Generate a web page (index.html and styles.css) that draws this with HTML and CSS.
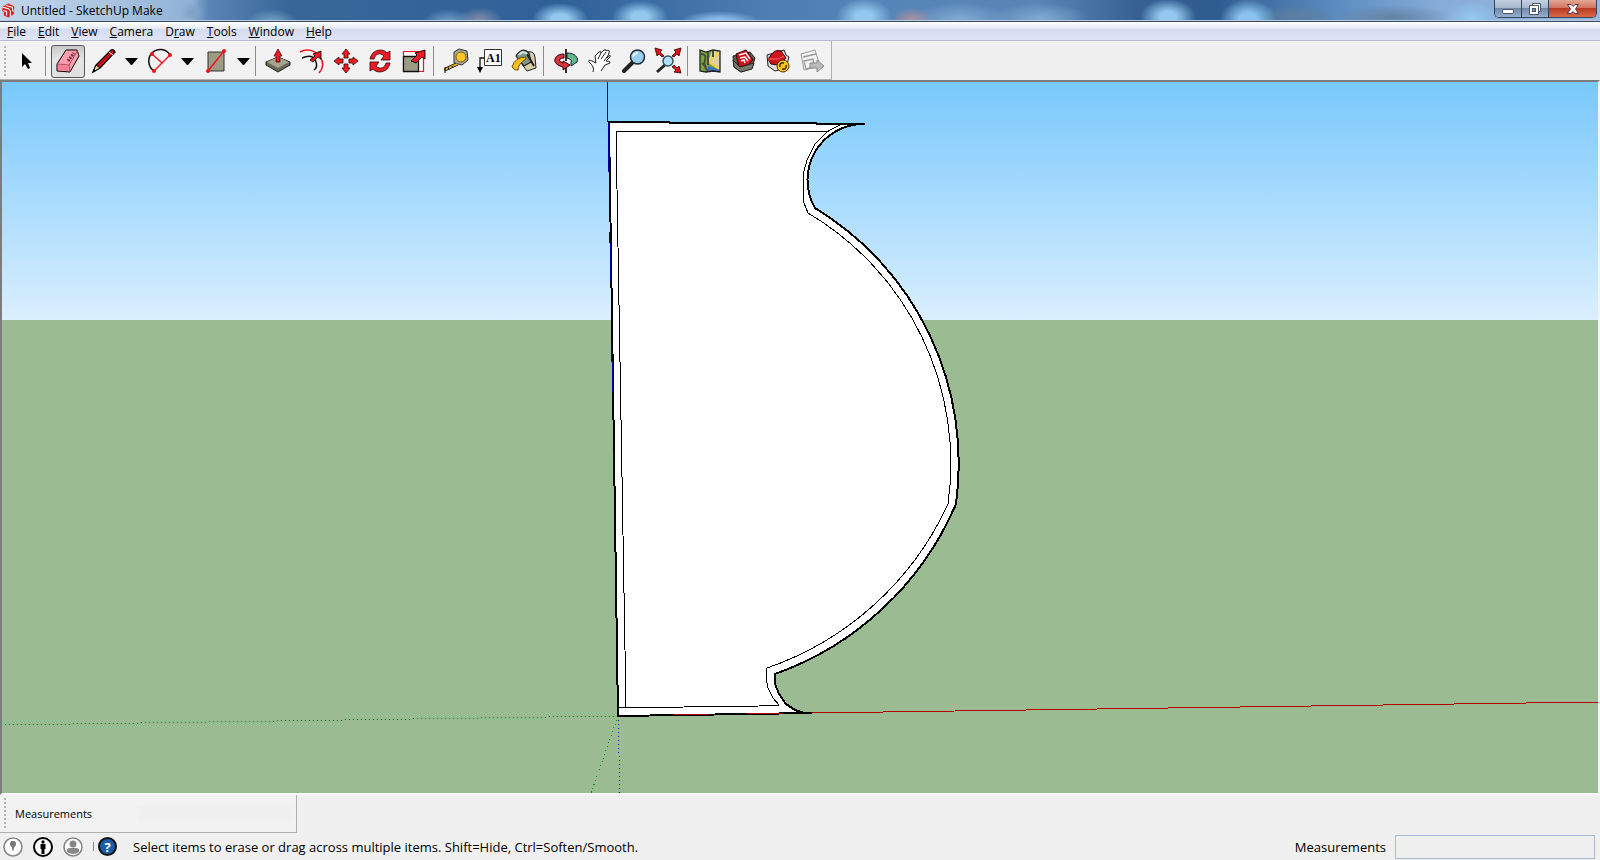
FILE: index.html
```
<!DOCTYPE html>
<html lang="en">
<head>
    <meta charset="UTF-8">
    <meta name="viewport" content="width=device-width, initial-scale=1.0">
    <title>Untitled - SketchUp Make</title>
    <link rel="stylesheet" href="styles.css">
</head>
<body>
    <header class="titlebar">
        <svg class="logo" viewBox="0 0 14 15">
            <path d="M1 3L7 0L13 3V11L7 15L2 13V9L0 8Z" fill="#e02020"/>
            <path d="M1 4L7 5.500L9 8V14M1 7.500L5 8.500V13M4 2L11 4L12 9" fill="none" stroke="#fff" stroke-width="1.100"/>
        </svg>
        <h1 class="title">Untitled - SketchUp Make</h1>
        <div class="window-buttons">
            <button class="win" aria-label="Minimize">
                <svg width="14" height="14" viewBox="0 0 14 14"><rect x="1.500" y="7.500" width="11" height="4" rx="1" fill="#fff" stroke="#4c5568"/></svg>
            </button>
            <button class="win" aria-label="Restore">
                <svg width="14" height="14" viewBox="0 0 14 14"><path d="M4.500 1.500H12.500V9.500H4.500Z" fill="#fff" stroke="#4c5568"/><path d="M1.500 3.500H10.500V12.500H1.500Z" fill="#fff" stroke="#4c5568"/><rect x="4.500" y="6.500" width="3" height="3" fill="#7990b0" stroke="#4c5568"/></svg>
            </button>
            <button class="win close" aria-label="Close">
                <svg width="14" height="14" viewBox="0 0 14 14"><path d="M1.500 2.500H5L7 4.500L9 2.500H12.500L9.500 7L12.500 11.500H9L7 9.500L5 11.500H1.500L4.500 7Z" fill="#fff" stroke="#5a3c48"/></svg>
            </button>
        </div>
    </header>

    <nav class="menubar">
        <button class="menu"><u>F</u>ile</button>
        <button class="menu"><u>E</u>dit</button>
        <button class="menu"><u>V</u>iew</button>
        <button class="menu"><u>C</u>amera</button>
        <button class="menu">D<u>r</u>aw</button>
        <button class="menu"><u>T</u>ools</button>
        <button class="menu"><u>W</u>indow</button>
        <button class="menu"><u>H</u>elp</button>
    </nav>

    <div class="toolbar-area">
        <div class="toolbar">
            <span class="grip"></span>
            <button class="tool" aria-label="Select">
                <svg viewBox="0 0 24 24"><path d="M8 4V18L11 15L14 20L16 19L14 14H18Z" fill="#000"/></svg>
            </button>
            <span class="sep"></span>
            <button class="tool active" aria-label="Eraser">
                <svg viewBox="0 0 24 24"><path d="M1 15L10 1L21 1L23 7L14 23L1 22Z" fill="#ff9cae" stroke="#000"/><path d="M1 15L13 16L22 1M13 16L14 23" fill="none" stroke="#a84a5c"/><path d="M2 16L12 17V22L2 21Z" fill="#ff7c92"/><path d="M12 12L18 4" stroke="#733040" stroke-width="3" stroke-dasharray="2 1"/></svg>
            </button>
            <div class="split">
                <button class="tool" aria-label="Line">
                    <svg viewBox="0 0 24 24"><path d="M1 23L4 16L19 1Q22 0 23 3L8 19Z" fill="#e3131b" stroke="#000" stroke-width="1.300"/><path d="M1 23L4 16L8 19Z" fill="#ead9a7" stroke="#000"/><path d="M6 17L20 3" stroke="#840007"/><path d="M1 23L2 20L4 22Z"/><path d="M17 3L21 6" stroke="#eee"/></svg>
                </button>
                <button class="drop" aria-label="Line tools"><svg viewBox="0 0 13 7"><path d="M0 0H13L7 7H6Z"/></svg></button>
            </div>
            <div class="split">
                <button class="tool" aria-label="Arc">
                    <svg viewBox="0 0 24 24"><path d="M6 22C0 18 -1 9 4 4C9 -1 18 -1 22 6" fill="none" stroke="#111" stroke-width="1.500"/><path d="M6 22L22 6M4 5L14 14" stroke="#f6101b" stroke-width="1.400"/><g fill="#f6101b"><circle cx="6" cy="22" r="2"/><circle cx="22" cy="6" r="2"/><circle cx="4" cy="5" r="2"/></g></svg>
                </button>
                <button class="drop" aria-label="Arc tools"><svg viewBox="0 0 13 7"><path d="M0 0H13L7 7H6Z"/></svg></button>
            </div>
            <div class="split">
                <button class="tool" aria-label="Rectangle">
                    <svg viewBox="0 0 24 24"><path d="M4 3H20V22H4Z" fill="#9c9c84" stroke="#333"/><path d="M4 22L20 2" stroke="#f6101b" stroke-width="1.400"/><g fill="#f6101b"><circle cx="4" cy="22" r="2"/><circle cx="20" cy="2" r="2"/></g></svg>
                </button>
                <button class="drop" aria-label="Shape tools"><svg viewBox="0 0 13 7"><path d="M0 0H13L7 7H6Z"/></svg></button>
            </div>
            <span class="sep"></span>
            <button class="tool" aria-label="Push/Pull">
                <svg viewBox="0 0 24 24"><path d="M0 13L12 8L24 13V16L12 23L0 16Z" fill="#696955" stroke="#222"/><path d="M1 13L12 8L23 13L12 19Z" fill="#a5a58e"/><path d="M12 0L16 7H14V13H10V7H8Z" fill="#ed1c24" stroke="#400" stroke-width=".7"/></svg>
            </button>
            <button class="tool" aria-label="Offset">
                <svg viewBox="0 0 24 24"><path d="M0 3C7 -1 15 1 20 8Q26 16 19 24" fill="none" stroke="#f6101b" stroke-width="1.500"/><path d="M2 9Q13 4 16 13Q18 18 14 21" fill="none" stroke="#111" stroke-width="1.500"/><path d="M10 11L15 7L13 5L21 2V10L18 8L13 13Z" fill="#ed1c24" stroke="#000" stroke-width=".8"/></svg>
            </button>
            <button class="tool" aria-label="Move">
                <svg viewBox="0 0 24 24"><g fill="#ed1c24" stroke="#300" stroke-width=".8"><path d="M12 0L16 5H14V9H10V5H8Z"/><path d="M12 24L16 19H14V15H10V19H8Z"/><path d="M0 12L5 8V10H9V14H5V16Z"/><path d="M24 12L19 8V10H15V14H19V16Z"/></g></svg>
            </button>
            <button class="tool" aria-label="Rotate">
                <svg viewBox="0 0 24 24"><g fill="#ed1c24" stroke="#300" stroke-width=".8"><path d="M2 10C4 0 15 -1 19 4L22 2V11H13L16 7C12 3 7 5 6 10Z"/><path d="M22 14C20 24 9 25 5 20L2 22V13H11L8 17C12 21 17 19 18 14Z"/></g></svg>
            </button>
            <button class="tool" aria-label="Scale">
                <svg viewBox="0 0 24 24"><path d="M1.500 2.500H21.500V22.500H1.500Z" fill="#fff" stroke="#f6101b" stroke-width="1.200"/><path d="M1.500 7.500H16.500V22.500H1.500Z" fill="#9c9c84" stroke="#111" stroke-width="1.300"/><path d="M9 12L15 6L13 4L23 1V10L20 8L14 14Z" fill="#ed1c24" stroke="#000" stroke-width=".9"/></svg>
            </button>
            <span class="sep"></span>
            <button class="tool" aria-label="Tape Measure">
                <svg viewBox="0 0 24 24"><path d="M10 3L15 0L23 2L24 11L18 16L10 14Z" fill="#aaa99c" stroke="#333"/><circle cx="17" cy="8" r="5" fill="#ffc52b" stroke="#7c5a10"/><path d="M12 14L1 19V22L14 16" fill="#f2b90b" stroke="#222"/><path d="M1 18V24M4 18L5 21M8 17L9 19" stroke="#111"/></svg>
            </button>
            <button class="tool" aria-label="Text">
                <svg viewBox="0 0 24 24"><path d="M6.500 .5H23.500V16.500H6.500Z" fill="#fff" stroke="#333"/><text x="8" y="13" class="icon-text">A1</text><path d="M6 9H2V19" fill="none" stroke="#111" stroke-width="1.300"/><path d="M-1 18H5L2 24Z"/></svg>
            </button>
            <button class="tool" aria-label="Paint Bucket">
                <svg viewBox="0 0 24 24"><path d="M12 4Q22 0 23 8L24 19L15 22L9 14Z" fill="#d8cda9" stroke="#222"/><path d="M4 7Q10 -3 17 4L19 13L12 17Z" fill="#7c9692" stroke="#222" stroke-width="1.200"/><path d="M15 5L22 17" stroke="#222" stroke-width="2"/><path d="M14 8Q3 8 0 18Q3 22 6 21Q6 15 14 10Z" fill="#f8bf1c" stroke="#6f4e00"/><path d="M7 6Q11 1 15 5" stroke="#d6e7e1" stroke-width="2" fill="none"/></svg>
            </button>
            <span class="sep"></span>
            <button class="tool" aria-label="Orbit">
                <svg viewBox="0 0 24 24"><path d="M13 4C21 4 25 9 23 13L17 17V13Q19 11 13 9Z" fill="#62b886" stroke="#123"/><path d="M10 5C3 5 0 9 1 13Q3 17 9 18V21L16 16L9 12V14Q4 12 6 10Q7 9 10 9Z" fill="#d9343c" stroke="#300"/><path d="M12 0V12M12 19V24" stroke="#111" stroke-width="1.700"/></svg>
            </button>
            <button class="tool" aria-label="Pan">
                <svg viewBox="0 0 24 24"><path d="M5 23Q7 18 1 13Q0 10 4 12L8 14L7 7L11 3Q13 1 13 4L16 1Q18 0 18 2L20 1Q22 1 21 4L19 9Q23 4 22 8L18 12Q23 12 22 14L17 16L13 22" fill="#fff" stroke="#222"/><path d="M10 10L13 4M13 10L18 3M16 12L19 8" stroke="#222"/></svg>
            </button>
            <button class="tool" aria-label="Zoom">
                <svg viewBox="0 0 24 24"><path d="M2 22L11 13" stroke="#222" stroke-width="4" stroke-linecap="round"/><circle cx="15.500" cy="8" r="7" fill="#9bcdf1" stroke="#202a33" stroke-width="1.500"/><path d="M11 8Q12 4 16 4" fill="none" stroke="#e6f6ff" stroke-width="2"/></svg>
            </button>
            <button class="tool" aria-label="Zoom Extents">
                <svg viewBox="0 0 24 24"><path d="M1 23L10 15" stroke="#222" stroke-width="3"/><g fill="#e3131b" stroke="#300" stroke-width=".8"><path d="M-1 -1L6 1L4 3L8 7L6 8L3 5L1 7Z"/><path d="M25 -1L18 1L20 3L16 7L18 8L21 5L23 7Z"/><path d="M25 24L18 23L20 21L16 18L18 16L21 19L23 17Z"/></g><circle cx="12" cy="12" r="5" fill="#aee1ff" stroke="#355" stroke-width="1.500"/></svg>
            </button>
            <span class="sep"></span>
            <button class="tool" aria-label="Add Location">
                <svg viewBox="0 0 24 24"><path d="M2 1L8 3L15 1L22 2V23L15 22L8 23L2 22Z" fill="#78a83f"/><path d="M14 2H22V22L10 13Z" fill="#e1cfaa"/><path d="M10 17L14 18L22 21V23L15 22L10 23Z" fill="#3f72b4"/><path d="M21 3L11 13L22 20" fill="none" stroke="#f4d23c" stroke-width="2"/><path d="M3 5Q9 5 7 11T10 22M10 3V16M15 2V8M4 14L8 18" fill="none" stroke="#454d42" stroke-width="2"/><path d="M2 1L8 3L15 1L22 2V23L15 22L8 23L2 22Z" fill="none" stroke="#222" stroke-width="1.300"/></svg>
            </button>
            <button class="tool" aria-label="Get Models">
                <svg viewBox="0 0 24 24"><path d="M1 7L7 6L18 3L23 9L20 19L9 23L2 18Z" fill="#5e604f" stroke="#222"/><path d="M4 5L14 1L21 11L16 16L7 18Z" fill="#d2121b" stroke="#300"/><path d="M7 6L14 4L18 10M8 9L13 8L16 12M9 12L12 11L13 14" fill="none" stroke="#fff" stroke-width="1.400"/><path d="M1 11L8 18L22 14L20 20L9 23L2 18Z" fill="#77796a" stroke="#222"/></svg>
            </button>
            <button class="tool" aria-label="Extension Warehouse">
                <svg viewBox="0 0 24 24"><path d="M1 6L8 4L18 1L20 6L23 8L20 19L9 22L2 17Z" fill="#ddd" stroke="#222"/><path d="M5 6Q9 0 15 2L20 9L13 16L5 15L2 10Z" fill="#d2121b" stroke="#300"/><path d="M2 10H12L18 7" stroke="#ff6870" fill="none"/><circle cx="17" cy="17" r="6" fill="#ffc61a" stroke="#503500"/><path d="M14 18Q13 13 18 14M20 16Q21 21 16 20" fill="none" stroke="#503500" stroke-width="1.700"/></svg>
            </button>
            <button class="tool" aria-label="Send to LayOut" disabled>
                <svg viewBox="0 0 24 24"><path d="M1 5L15 1L20 17L4 21Z" fill="#f4f4f4" stroke="#999"/><path d="M3 8L16 5M4 12L13 10L14 18L6 20Z" fill="none" stroke="#999" stroke-width="1.300"/><path d="M10 14H17V11L24 17L17 23V19H10Z" fill="#bbb" stroke="#888"/></svg>
            </button>
        </div>
    </div>

    <main class="viewport">
        <svg class="scene" viewBox="2 82 1596 711" preserveAspectRatio="xMidYMid slice" aria-label="Model">
            <defs>
                <linearGradient id="sky" x1="0" y1="0" x2="0" y2="1">
                    <stop offset="0" stop-color="#78c8fc"/>
                    <stop offset="1" stop-color="#daeffe"/>
                </linearGradient>
            </defs>
            <rect x="2" y="82" width="1596" height="238" fill="url(#sky)"/>
            <rect x="2" y="320" width="1596" height="473" fill="#9bbc92"/>

            <!-- axes behind the origin -->
            <path class="axis dotted red" d="M618 716L2 725"/>
            <path class="axis dotted green" d="M618 716L591 793"/>
            <path class="axis dotted blue" d="M618 716L620 793"/>
            <path class="axis blue" d="M607 82V122"/>

            <!-- outer profile -->
            <path class="face" d="M609 122L669 122L670 123L816 123L817 124H865A56 56 0 0 0 815 208A299 299 0 0 1 956 504A309 309 0 0 1 775 674V684L779 694L786 704L795 710L804 713H812L618 716Z"/>

            <!-- inner offset -->
            <path class="edge" d="M840 125L828 131L815 144L807 160L803 175V190L804 203L808 213A291 291 0 0 1 948 504A310 310 0 0 1 767 668L766 677L768 688L773 698L779 705L759 706L684 707L619 708"/>
            <path class="edge" d="M626 707L616 131H829"/>

            <path class="axis blue edge-dash" d="M608 122L614 480"/>
            <path class="axis red" d="M674 715L710 714M747 714L783 713M812 713L1598 702"/>
        </svg>
    </main>

    <section class="dock">
        <div class="measure-bar">
            <span class="grip"></span>
            <label for="dock-value">Measurements</label>
            <input id="dock-value" class="dock-value" type="text" disabled>
        </div>
    </section>

    <footer class="statusbar">
        <button class="status-icon" aria-label="Geo-location">
            <svg viewBox="0 0 20 20"><circle cx="10" cy="10" r="9" fill="#fff" stroke="#888" stroke-width="1.600"/><path d="M10 15L8.500 9Q6 4 10 4T11.500 9Z" fill="#777"/><circle cx="10" cy="7" r="3" fill="#777"/></svg>
        </button>
        <button class="status-icon" aria-label="Credits">
            <svg viewBox="0 0 20 20"><circle cx="10" cy="10" r="9" fill="#fff" stroke="#000" stroke-width="2"/><circle cx="10" cy="5" r="1.700"/><path d="M7.500 7H12.500V12H11.500V17H8.500V12H7.500Z"/></svg>
        </button>
        <button class="status-icon" aria-label="Sign in">
            <svg viewBox="0 0 20 20"><circle cx="10" cy="10" r="9" fill="#fff" stroke="#888" stroke-width="1.600"/><circle cx="10" cy="7" r="3.500" fill="#888"/><path d="M4 15V13Q4 11 7 11H13Q16 11 16 13V15Q10 19 4 15Z" fill="#888"/></svg>
        </button>
        <span class="status-line"></span>
        <button class="status-icon help" aria-label="Help">?</button>
        <p class="hint">Select items to erase or drag across multiple items. Shift=Hide, Ctrl=Soften/Smooth.</p>
        <label for="measure-value">Measurements</label>
        <input id="measure-value" class="measure-value" type="text" readonly>
    </footer>
</body>
</html>
```
FILE: styles.css
```
* {
    box-sizing: border-box;
}

body {
    margin: 0;
    height: 100vh;
    display: flex;
    flex-direction: column;
    overflow: hidden;
    background-color: #f0f0f0;
    color: #000;
    font-family: "Open Sans", "Noto Sans", sans-serif;
    font-size: 12px;
}

button {
    border: none;
    padding: 0;
    background: none;
    color: inherit;
    font: inherit;
}

/* title bar */
.titlebar {
    display: flex;
    align-items: center;
    flex: none;
    height: 22px;
    padding-left: 2px;
    border-bottom: 1px solid #3c4a60;
    box-shadow: inset 0 -1px #b4cce4;
    background:
        radial-gradient(ellipse 12px 10px at 12% 60%, #7f9fc4, transparent),
        radial-gradient(ellipse 26px 14px at 17% 110%, #7ba9d0, transparent),
        radial-gradient(ellipse 26px 14px at 28% 110%, #7ba9d0, transparent),
        radial-gradient(ellipse 24px 14px at 30% 100%, #8c8fae, transparent),
        radial-gradient(ellipse 28px 16px at 35% 90%, #92c8ef 30%, transparent),
        radial-gradient(ellipse 28px 16px at 40% 80%, #92c8ef 30%, transparent),
        radial-gradient(ellipse 40px 10px at 45% 100%, #86b9e6 30%, transparent),
        radial-gradient(ellipse 28px 18px at 54% 80%, #92c8ef 30%, transparent),
        radial-gradient(ellipse 22px 14px at 57% 100%, #b3919a, transparent),
        radial-gradient(ellipse 50px 16px at 60% 90%, #81a9d4, transparent),
        radial-gradient(ellipse 50px 16px at 65% 90%, #81a9d4, transparent),
        radial-gradient(ellipse 28px 18px at 73% 80%, #92c8ef 30%, transparent),
        radial-gradient(ellipse 28px 20px at 78% 90%, #8ac2ee 30%, transparent),
        radial-gradient(ellipse 40px 12px at 81% 80%, #5f7f9f, transparent),
        radial-gradient(ellipse 60px 12px at 87% 80%, #6482a4, transparent),
        radial-gradient(ellipse 28px 18px at 92% 90%, #92c8ef, transparent),
        linear-gradient(90deg, #c3d6ea 0%, #a9c4e0 7%, #8fb1d6 12%, #5a86b6 13%, #386698 18%, #2f6199 35%, #4c7eb1 48%, #5585b8 55%, #5985b5 65%, #366192 71%, #2f5c90 76%, #5f8fc2 84%, #87acd8 90%, #9cb9dc 100%);
}

.logo {
    width: 13px;
    height: 15px;
}

.title {
    flex: 1;
    margin: 0 0 0 6px;
    font-size: 12px;
    font-weight: normal;
    line-height: 20px;
}

.window-buttons {
    display: flex;
    align-self: flex-start;
    margin-right: 3px;
    border: 1px solid #34435c;
    border-top: none;
    border-radius: 0 0 5px 5px;
    overflow: hidden;
}

.win {
    display: flex;
    align-items: center;
    justify-content: center;
    width: 27px;
    height: 17px;
    border-right: 1px solid #34435c;
    background: linear-gradient(#c5d1e0 0%, #a6b8cf 45%, #7189a9 50%, #96b0cf 100%);
}

.close {
    width: 47px;
    border-right: none;
    background: linear-gradient(#e3a794 0%, #d07560 45%, #b93a22 50%, #d86b48 100%);
}

/* menu */
.menubar {
    display: flex;
    flex: none;
    height: 19px;
    padding-left: 1px;
    border-bottom: 1px solid #b6bccf;
    background: linear-gradient(#fff 0%, #e7ebf4 35%, #d5dbee 38%, #e0e5f6 100%);
}

.menu {
    padding: 1px 6px 0;
    line-height: 18px;
}

/* toolbar */
.toolbar-area {
    display: flex;
    flex: none;
    height: 39px;
}

.toolbar {
    display: flex;
    align-items: center;
    padding: 2px 2px 0 4px;
    border-right: 1px solid #b0b0b0;
    border-bottom: 1px solid #b0b0b0;
    background-color: #f2f2f2;
}

.grip {
    align-self: stretch;
    width: 2px;
    margin: 3px 3px 3px 0;
    background: repeating-linear-gradient(#b4b4b4 0 2px, transparent 2px 4px);
}

.tool {
    display: flex;
    align-items: center;
    justify-content: center;
    width: 34px;
    height: 33px;
    border-radius: 3px;
}

.tool svg {
    width: 24px;
    height: 24px;
    overflow: visible;
}

.tool.active {
    border: 1px solid #555;
    background: linear-gradient(#c8c8c8, #e4e4e4 40%, #e0e0e0);
}

.icon-text {
    font-family: "Liberation Serif", serif;
    font-size: 12px;
    font-weight: bold;
}

.split {
    display: flex;
    align-items: center;
    margin-left: 2px;
}

.drop {
    display: flex;
    align-items: center;
    justify-content: center;
    width: 20px;
    height: 33px;
}

.drop svg {
    width: 13px;
    height: 7px;
}

.sep {
    width: 1px;
    height: 30px;
    margin: 0 5px 0 2px;
    background-color: #8c8c8c;
}

/* drawing area */
.viewport {
    flex: 1;
    min-height: 0;
    border: 2px solid;
    border-color: #7c7c7c #f4f4f4 #f8f8f8 #7c7c7c;
}

.scene {
    display: block;
    width: 100%;
    height: 100%;
    shape-rendering: crispEdges;
}

.face {
    fill: #fff;
    stroke: #000;
    stroke-width: 2;
}

.edge {
    fill: none;
    stroke: #000;
}

.axis {
    fill: none;
}

.dotted {
    stroke-dasharray: 1 3;
}

.edge-dash {
    stroke-dasharray: 50 60;
}

.red {
    stroke: #b40000;
}

.green {
    stroke: #00a000;
}

.blue {
    stroke: #0000a8;
}

/* measurements dock */
.dock {
    display: flex;
    flex: none;
    height: 38px;
}

.measure-bar {
    display: flex;
    align-items: center;
    padding: 0 4px;
    border-right: 1px solid #b0b0b0;
    border-bottom: 1px solid #b0b0b0;
    background-color: #f2f2f2;
    font-size: 11px;
}

.measure-bar label {
    width: 129px;
    padding-left: 6px;
}

.dock-value {
    width: 154px;
    height: 16px;
    border: none;
    background-color: #f0f0f0;
}

/* status bar */
.statusbar {
    display: flex;
    align-items: center;
    flex: none;
    height: 27px;
    padding: 0 5px 0 3px;
    font-size: 13px;
}

.status-icon {
    width: 20px;
    height: 20px;
    margin-right: 10px;
}

.status-icon svg {
    display: block;
}

.status-line {
    width: 1px;
    height: 9px;
    margin-right: 4px;
    background-color: #888;
}

.help {
    width: 19px;
    height: 19px;
    margin-right: 16px;
    border: 2px solid #111;
    border-radius: 50%;
    background-color: #1a5da8;
    color: #fff;
    font-weight: bold;
    line-height: 14px;
}

.hint {
    flex: 1;
    margin: 0;
}

.measure-value {
    width: 200px;
    height: 24px;
    margin-left: 9px;
    border: 1px solid #a9bbd4;
    background-color: #f0f0f0;
}
```
